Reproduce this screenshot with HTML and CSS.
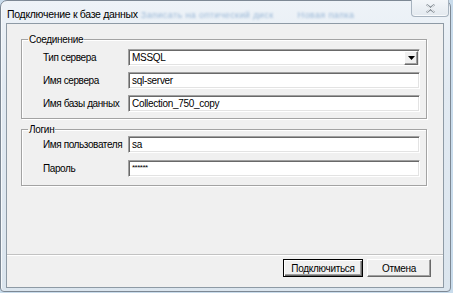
FILE: index.html
```html
<!DOCTYPE html>
<html>
  <head>
    <meta charset="utf-8">
    <title>Подключение к базе данных</title>
    <link rel="stylesheet" href="styles.css">
  </head>
  <body>
    <div class="window">
      <div class="titlebar">
        <span class="title">Подключение к базе данных</span>
        <span class="glass glass-a">Записать на оптический диск</span>
        <span class="glass glass-b">Новая папка</span>
        <span class="close">
          <svg width="11" height="9" viewBox="0 0 11 9">
            <path d="M1.5 0.5 L5.5 3.5 L9.5 0.5 M1.5 8.5 L5.5 5.5 L9.5 8.5" stroke="#8c949c" stroke-width="1.6" fill="none"/>
            <path d="M1.5 0.5 L9.5 8.5 M9.5 0.5 L1.5 8.5" stroke="#f4f6f8" stroke-width="0.8" fill="none"/>
          </svg>
        </span>
      </div>
      <div class="client">
        <div class="content">
          <fieldset class="group group-conn">
            <legend>Соединение</legend>
            <span class="label">Тип сервера</span>
            <div class="field combo">
              <span class="value">MSSQL</span>
              <span class="drop">
                <svg width="7" height="4" viewBox="0 0 7 4"><path d="M0 0 H7 L3.5 4 Z" fill="#000"/></svg>
              </span>
            </div>
            <span class="label">Имя сервера</span>
            <div class="field"><span class="value">sql-server</span></div>
            <span class="label">Имя базы данных</span>
            <div class="field"><span class="value">Collection_750_copy</span></div>
          </fieldset>
          <fieldset class="group group-login">
            <legend>Логин</legend>
            <span class="label">Имя пользователя</span>
            <div class="field"><span class="value">sa</span></div>
            <span class="label">Пароль</span>
            <div class="field"><span class="value secret">******</span></div>
          </fieldset>
        </div>
        <div class="buttons">
          <button class="btn btn-default">Подключиться</button>
          <button class="btn btn-cancel">Отмена</button>
        </div>
      </div>
    </div>
  </body>
</html>
```

FILE: styles.css
```css
*, *:before, *:after {
  box-sizing: border-box;
}
html, body {
  margin: 0;
  padding: 0;
}
body {
  width: 453px;
  height: 293px;
  background: #c9dcec;
  font-family: "Liberation Sans", Arial, sans-serif;
  font-size: 10px;
  letter-spacing: -0.3px;
  color: #000;
  overflow: hidden;
}
.window {
  width: 451px;
  height: 292px;
  display: flex;
  flex-direction: column;
  padding: 0 6px 3px 5px;
  border: 1px solid #7d8894;
  border-radius: 7px 7px 4px 4px;
  background: linear-gradient(to bottom, #eef3f8 0%, #e2eaf2 30%, #dbe5ee 100%);
  box-shadow: inset 1px 0 0 #f7fafc;
}
.titlebar {
  height: 22px;
  display: flex;
  align-items: flex-start;
}
.title {
  margin: 6px 0 0 1px;
  font-size: 10.5px;
  letter-spacing: -0.3px;
  line-height: 14px;
  color: #000;
  white-space: nowrap;
}
.glass {
  margin-top: 9px;
  font-size: 9px;
  letter-spacing: 0.4px;
  line-height: 11px;
  color: #7ea4cc;
  filter: blur(0.9px);
  opacity: 0.75;
  white-space: nowrap;
}
.glass-a {
  margin-left: 3px;
}
.glass-b {
  margin-left: 24px;
}
.close {
  margin-left: auto;
  margin-right: -5px;
  margin-top: -1px;
  width: 38px;
  height: 17px;
  display: flex;
  align-items: center;
  justify-content: center;
  border: 1px solid #a7b3bf;
  border-top: none;
  border-radius: 0 0 4px 4px;
  background: linear-gradient(to bottom, #f3f6f9, #e3e9ef);
  box-shadow: inset 0 -1px 0 #f8fafc;
}
.client {
  flex: 1;
  display: flex;
  flex-direction: column;
  background: #f0f0f0;
  border: 1px solid #8e9aa5;
}
.content {
  flex: 1;
  padding: 9px 16px 0 14px;
}
.group {
  margin: 0;
  width: 406px;
  display: grid;
  grid-template-columns: 85px 1fr;
  row-gap: 6px;
  align-items: center;
  border: 1px solid #a3a3a3;
  box-shadow: inset 1px 1px 0 #fff, 1px 1px 0 #fff;
  padding: 3px 6px 6px 21px;
}
.group legend {
  padding: 0 1px;
  margin-left: -15px;
  line-height: 13px;
}
.group-login {
  margin-top: 4px;
  padding-top: 0;
  padding-bottom: 8px;
  row-gap: 7px;
}
.label {
  white-space: nowrap;
  letter-spacing: -0.4px;
}
.field {
  height: 17px;
  display: flex;
  align-items: center;
  background: #fff;
  border: 1px solid;
  border-color: #a0a0a0 #fff #fff #a0a0a0;
  box-shadow: inset 1px 1px 0 #696969, inset -1px -1px 0 #e3e3e3;
  padding: 0 2px 0 3px;
}
.value {
  line-height: 13px;
  white-space: nowrap;
}
.secret {
  font-size: 8px;
  letter-spacing: -0.5px;
  margin-top: -3px;
}
.combo {
  justify-content: space-between;
  padding-right: 1px;
}
.drop {
  width: 14px;
  height: 14px;
  display: flex;
  align-items: center;
  justify-content: center;
  background: #f0f0f0;
  border: 1px solid;
  border-color: #fff #696969 #696969 #fff;
  box-shadow: inset -1px -1px 0 #a0a0a0;
}
.buttons {
  height: 33px;
  display: flex;
  justify-content: flex-end;
  align-items: flex-start;
  gap: 4px;
  padding: 4px 12px 0 0;
  border-top: 1px solid #c2c2c2;
  box-shadow: inset 0 1px 0 #fff;
}
.btn {
  height: 18px;
  padding: 0;
  font-family: "Liberation Sans", Arial, sans-serif;
  font-size: 10px;
  letter-spacing: -0.3px;
  color: #000;
  background: #f0f0f0;
  border: 1px solid;
  border-color: #fff #696969 #696969 #fff;
  box-shadow: inset -1px -1px 0 #a0a0a0;
}
.btn-default {
  width: 80px;
  border: 1px solid #000;
  box-shadow: inset 1px 1px 0 #fff, inset -1px -1px 0 #696969, inset -2px -2px 0 #a0a0a0;
}
.btn-cancel {
  width: 64px;
}
```
